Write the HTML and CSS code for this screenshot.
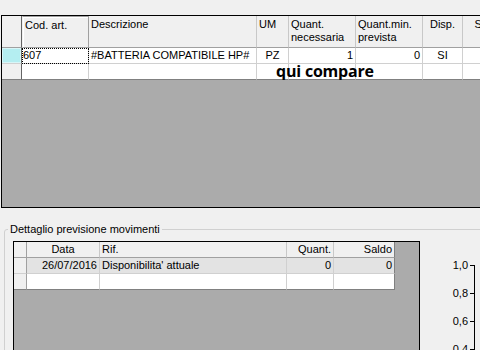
FILE: index.html
```html
<!DOCTYPE html>
<html lang="it">
<head>
    <meta charset="UTF-8">
    <title>Previsione movimenti</title>
    <link rel="stylesheet" href="styles.css">
</head>
<body>

    <div class="grid articles">
        <div class="row head">
            <div class="cell ind"></div>
            <div class="cell current">Cod. art.</div>
            <div class="cell">Descrizione</div>
            <div class="cell">UM</div>
            <div class="cell">Quant.<br>necessaria</div>
            <div class="cell">Quant.min.<br>prevista</div>
            <div class="cell center">Disp.</div>
            <div class="cell center">Saldo</div>
        </div>
        <div class="row">
            <div class="cell ind selected"></div>
            <div class="cell focus">607</div>
            <div class="cell">#BATTERIA COMPATIBILE HP#</div>
            <div class="cell center">PZ</div>
            <div class="cell right">1</div>
            <div class="cell right">0</div>
            <div class="cell center">SI</div>
            <div class="cell"></div>
        </div>
        <div class="row last">
            <div class="cell ind"></div>
            <div class="cell"></div>
            <div class="cell"></div>
            <div class="cell"></div>
            <div class="cell"></div>
            <div class="cell"></div>
            <div class="cell"></div>
            <div class="cell"></div>
            <span class="note">qui compare</span>
        </div>
    </div>

    <fieldset class="group">
        <legend>Dettaglio previsione movimenti</legend>
        <div class="group-body">
            <div class="grid moves">
                <div class="row head">
                    <div class="cell ind"></div>
                    <div class="cell center">Data</div>
                    <div class="cell">Rif.</div>
                    <div class="cell right">Quant.</div>
                    <div class="cell right">Saldo</div>
                </div>
                <div class="row current-row">
                    <div class="cell ind"></div>
                    <div class="cell right">26/07/2016</div>
                    <div class="cell">Disponibilita' attuale</div>
                    <div class="cell right">0</div>
                    <div class="cell right">0</div>
                </div>
                <div class="row last">
                    <div class="cell ind"></div>
                    <div class="cell"></div>
                    <div class="cell"></div>
                    <div class="cell"></div>
                    <div class="cell"></div>
                </div>
            </div>

            <svg class="chart" width="70" height="120" viewBox="0 0 70 120">
                <g class="labels">
                    <text x="48" y="28">1,0</text>
                    <text x="48" y="56">0,8</text>
                    <text x="48" y="84">0,6</text>
                    <text x="48" y="112">0,4</text>
                </g>
                <path d="M50 24.5h4.5M50 52.5h4.5M50 80.5h4.5M50 108.5h4.5M54.5 24v96" stroke="#000" fill="none"/>
            </svg>
        </div>
    </fieldset>

</body>
</html>
```

FILE: styles.css
```css
html, body {
    overflow: hidden;
}
body {
    margin: 0;
    width: 480px;
    height: 350px;
    background: #f0f0f0;
    font-family: "Liberation Sans", Arial, sans-serif;
    font-size: 11px;
    color: #000;
}
.grid {
    border: 1px solid #000;
    background: #ababab;
    box-sizing: border-box;
}
.row {
    display: grid;
    height: 16px;
}
.cell {
    box-sizing: border-box;
    background: #fff;
    border-right: 1px solid #d0d0d0;
    border-bottom: 1px solid #d0d0d0;
    padding: 0 2px;
    line-height: 15px;
    white-space: nowrap;
    overflow: hidden;
}
.head .cell {
    background: #f0f0f0;
    border-right-color: #c8c8c8;
    border-bottom-color: #a0a0a0;
}
.center {
    text-align: center;
}
.right {
    text-align: right;
}
.last .cell {
    border-bottom-color: #808080;
}

/* griglia articoli */
.articles {
    margin: 15px 0 0 1px;
    width: 560px;
    height: 193px;
}
.articles .row {
    grid-template-columns: 20px 67px 168px 32px 67px 67px 40px 52px 60px;
}
.articles .head {
    height: 32px;
}
.articles .head .cell {
    line-height: 13px;
    padding-top: 2px;
}
.articles .ind {
    border-right-color: #646464;
    background: #f0f0f0;
}
.articles .head .current {
    border: 1px solid #a0a0a0;
    border-left-color: #f0f0f0;
    box-shadow: inset 1px 1px 0 #fff;
}
.ind.selected {
    background: #b4eef1;
    box-shadow: inset 0 0 0 1px #d8f6f8;
}
.focus {
    outline: 1px dotted #000;
    outline-offset: -1px;
    padding-left: 1px;
}
.articles .last {
    position: relative;
    overflow: hidden;
}
.note {
    position: absolute;
    left: 274px;
    top: -1px;
    font-family: "Open Sans", sans-serif;
    font-weight: bold;
    font-size: 16px;
    line-height: 16px;
    letter-spacing: -0.2px;
}

/* dettaglio */
.group {
    margin: 15px 0 0 4px;
    padding: 5px 0 0 8px;
    width: 560px;
    height: 160px;
    border: 1px solid #d0d0d0;
    border-radius: 3px;
    box-sizing: border-box;
}
.group legend {
    padding: 0 2px;
    margin-left: -5px;
    line-height: 13px;
}
.group-body {
    display: flex;
    align-items: flex-start;
}
.moves {
    width: 407px;
    height: 140px;
}
.moves .row {
    grid-template-columns: 13px 73px 187px 47px 61px;
}
.moves .ind {
    background: #f0f0f0;
    border-right-color: #a0a0a0;
}
.moves .row .cell:last-child {
    border-right-color: #808080;
}
.moves .current-row .cell {
    background: #e3e3e3;
}
.moves .current-row .ind {
    background: #f0f0f0;
}
.chart {
    display: block;
    flex: none;
}
.labels text {
    font-family: "Liberation Sans", Arial, sans-serif;
    font-size: 11px;
    text-anchor: end;
    fill: #000;
}
```
